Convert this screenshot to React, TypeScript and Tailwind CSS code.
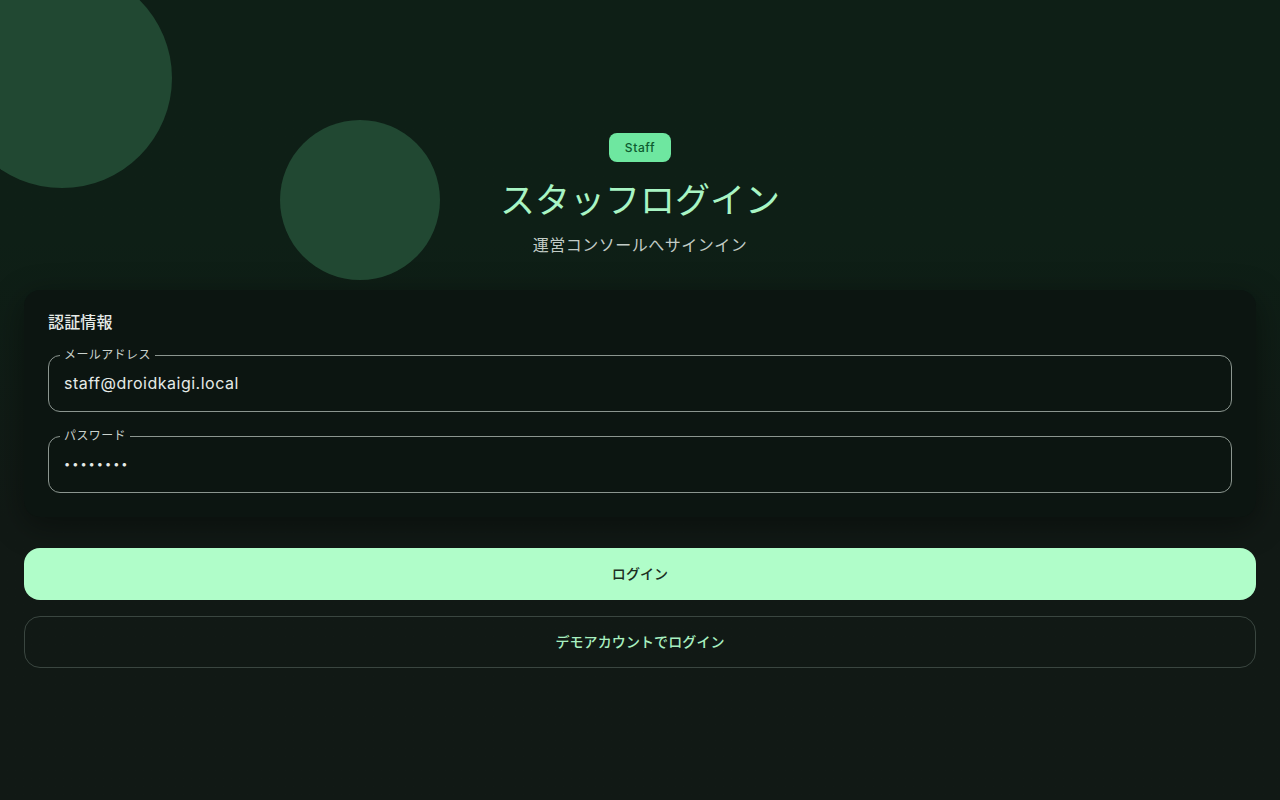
import { useState } from "react";

const font = { fontFamily: 'Inter, "Noto Sans CJK JP", sans-serif' };

function OutlinedField({
  label,
  value,
  type,
  inputClass,
}: {
  label: string;
  value: string;
  type: string;
  inputClass: string;
}) {
  return (
    <fieldset className="rounded-xl border border-[#8b958f] px-[15px] pb-2">
      <legend className="ml-[-4px] px-1 text-xs leading-4 tracking-[0.4px] text-[#c9d1cc]">{label}</legend>
      <input
        type={type}
        defaultValue={value}
        className={`block h-10 w-full bg-transparent text-[#e6ebe8] outline-none ${inputClass}`}
        style={font}
      />
    </fieldset>
  );
}

export default function App() {
  const [email] = useState("staff@droidkaigi.local");
  const [password] = useState("password");

  return (
    <div
      className="min-h-screen w-full bg-linear-to-b from-[#0e1f16] from-30% to-[#111915] to-65%"
      style={font}
    >
      <div className="relative h-[290px] overflow-hidden">
        <div className="absolute left-[-48px] top-[-32px] h-[220px] w-[220px] rounded-full bg-[#214832]" />
        <div className="absolute left-[280px] top-[120px] h-[160px] w-[160px] rounded-full bg-[#214832]" />
        <div className="relative flex flex-col items-center pt-[133px]">
          <span className="flex h-[29px] items-center rounded-lg bg-[#6ee7a0] px-4 text-xs font-medium tracking-[0.6px] text-[#0d5a2f]">
            Staff
          </span>
          <h1 className="mt-[15px] text-[35px] leading-[46px] text-[#a8f5c4]">スタッフログイン</h1>
          <p className="mt-[10px] text-base leading-6 tracking-[0.5px] text-[#c2ccc6]">運営コンソールへサインイン</p>
        </div>
      </div>

      <div className="px-6">
        <div className="rounded-2xl bg-[#0c1511] px-6 pb-6 pt-5 shadow-[0_8px_32px_rgba(0,0,0,0.4)]">
          <h2 className="mb-[13px] text-base font-medium leading-6 tracking-[0.15px] text-[#e6ebe8]">認証情報</h2>
          <div className="flex flex-col gap-4">
            <OutlinedField label="メールアドレス" value={email} type="email" inputClass="text-base tracking-[0.5px]" />
            <OutlinedField label="パスワード" value={password} type="password" inputClass="text-[11px] tracking-[2px]" />
          </div>
        </div>

        <div className="mt-[31px] flex flex-col gap-4">
          <button className="h-[52px] w-full rounded-2xl bg-[#b0fdc9] text-sm font-medium tracking-[0.1px] text-[#1b2e22]">
            ログイン
          </button>
          <button className="h-[52px] w-full rounded-2xl border border-[#3a4640] text-sm font-medium tracking-[0.1px] text-[#a8f0c0]">
            デモアカウントでログイン
          </button>
        </div>
      </div>
    </div>
  );
}
